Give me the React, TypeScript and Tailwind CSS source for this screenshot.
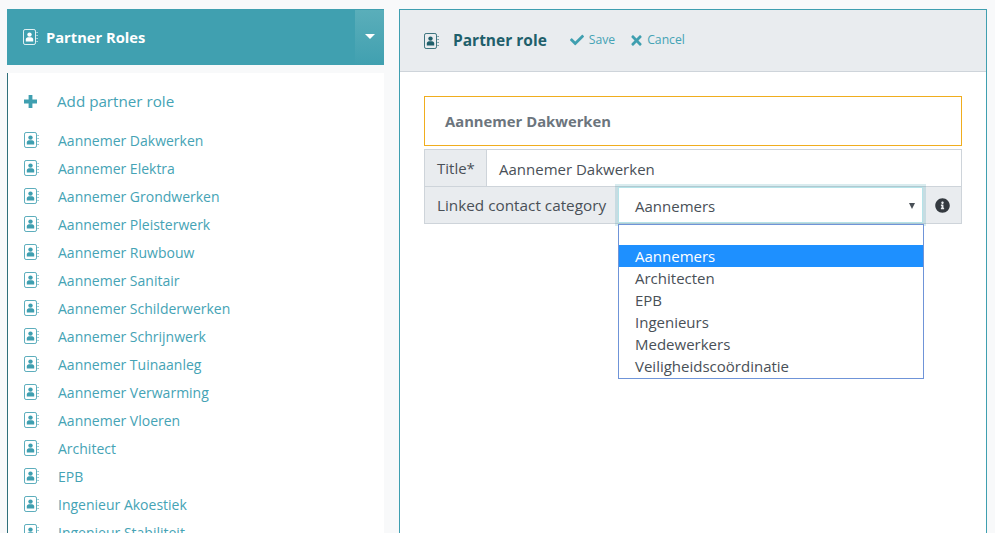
import React from 'react';
import { FaCheck, FaInfoCircle, FaTimes } from 'react-icons/fa';

const roles = [
  'Aannemer Dakwerken',
  'Aannemer Elektra',
  'Aannemer Grondwerken',
  'Aannemer Pleisterwerk',
  'Aannemer Ruwbouw',
  'Aannemer Sanitair',
  'Aannemer Schilderwerken',
  'Aannemer Schrijnwerk',
  'Aannemer Tuinaanleg',
  'Aannemer Verwarming',
  'Aannemer Vloeren',
  'Architect',
  'EPB',
  'Ingenieur Akoestiek',
  'Ingenieur Stabiliteit',
];

const categories = ['Aannemers', 'Architecten', 'EPB', 'Ingenieurs', 'Medewerkers', 'Veiligheidscoördinatie'];

// address book outline with a person in it and the small tabs on the right
function BookIcon({ className }: { className?: string }) {
  return (
    <svg viewBox="0 0 15 16" className={className} fill="currentColor">
      <rect x="0.5" y="0.5" width="12" height="15" rx="1.6" fill="none" stroke="currentColor" strokeWidth="1" opacity="0.85" />
      <circle cx="6.5" cy="5.6" r="2.2" />
      <path d="M2.8 12.4v-1.8c0-1.4 1-2.3 2.2-2.3h3c1.2 0 2.2.9 2.2 2.3v1.8z" />
      <rect x="13.4" y="3" width="1.4" height="1" opacity="0.7" />
      <rect x="13.4" y="6" width="1.4" height="1" opacity="0.7" />
      <rect x="13.4" y="9" width="1.4" height="1" opacity="0.7" />
      <rect x="13.4" y="12" width="1.4" height="1" opacity="0.7" />
    </svg>
  );
}

export default function App() {
  return (
    <div className="h-[533px] w-[995px] overflow-hidden bg-[#f8f9fa] font-['Open_Sans','Noto_Sans',sans-serif] text-[14px] text-[#495057]">
      <div className="flex items-start pt-[9px] pl-[7px]">
        {/* Left column */}
        <div className="w-[377px] shrink-0">
          <div className="flex h-[56px] items-stretch justify-between bg-[#40a0b0] text-white">
            <div className="flex items-center pl-[16px]">
              <BookIcon className="h-[16px] w-[15px]" />
              <span className="ml-[8px] text-[14.7px] font-bold">Partner Roles</span>
            </div>
            <div className="mt-[1px] flex w-[29px] items-start justify-center bg-gradient-to-b from-[#5aaeba] to-[#40a0b0] pt-[24px]">
              <span className="h-0 w-0 border-x-[5px] border-t-[5px] border-x-transparent border-t-white" />
            </div>
          </div>
          <div className="mt-[8px] h-[470px] border-l border-[#2f6f7a] bg-white pt-[16px]">
            <div className="flex h-[24px] items-center pl-[16px] text-[15.2px] text-[#45a3b5]">
              <svg viewBox="0 0 13 13" className="h-[13px] w-[13px] text-[#3f9fb0]" fill="currentColor">
                <path d="M4.6 0h3.8v4.6H13v3.8H8.4V13H4.6V8.4H0V4.6h4.6z" />
              </svg>
              <span className="ml-[20px]">Add partner role</span>
            </div>
            <ul className="mt-[13px]">
              {roles.map((role) => (
                <li key={role} className="flex h-[28px] items-center pl-[16px] text-[#45a3b5]">
                  <BookIcon className="h-[16px] w-[15px] text-[#3f9fb0]" />
                  <span className="ml-[19px]">{role}</span>
                </li>
              ))}
            </ul>
          </div>
        </div>

        {/* Right panel */}
        <div className="ml-[15px] h-[540px] w-[588px] shrink-0 border border-[#3f9fb0] bg-white">
          <div className="flex h-[62px] items-center border-b border-[#ced4da] bg-[#e9ecef] pl-[24px]">
            <BookIcon className="h-[16px] w-[15px] text-[#1f5f6b]" />
            <span className="ml-[14px] text-[15.5px] font-bold text-[#1f5f6b]">Partner role</span>
            <span className="ml-[23px] flex items-center text-[12.2px] text-[#45a3b5]">
              <FaCheck className="h-[14px] w-[14px] text-[#3f9fb0]" />
              <span className="ml-[5px]">Save</span>
            </span>
            <span className="ml-[15px] flex items-center text-[12.2px] text-[#45a3b5]">
              <FaTimes className="h-[15px] w-[13px] text-[#3f9fb0]" />
              <span className="ml-[4px]">Cancel</span>
            </span>
          </div>
          <div className="pt-[24px] pl-[24px]">
            <div className="flex h-[50px] w-[538px] items-center border border-[#f0ad1e] pl-[20px] text-[14.8px] font-bold text-[#6c757d]">
              Aannemer Dakwerken
            </div>
            <div className="mt-[3px] w-[538px] border border-[#ced4da] text-[15px]">
              <div className="flex h-[37px] border-b border-[#ced4da]">
                <div className="flex w-[62px] items-center border-r border-[#ced4da] bg-[#e9ecef] pl-[12px]">Title*</div>
                <div className="flex flex-1 items-center pt-[2px] pl-[12px]">Aannemer Dakwerken</div>
              </div>
              <div className="flex h-[36px] bg-[#e9ecef]">
                <div className="flex w-[193px] items-center pl-[12px] text-[15.3px]">Linked contact category</div>
                <div className="relative h-[36px] w-[305px]">
                  <div className="flex h-full items-center justify-between border border-[#b5e3e8] bg-white pt-[2px] pr-[7px] pl-[16px] shadow-[0_0_0_3px_rgba(64,160,176,0.2)]">
                    <span>Aannemers</span>
                    <span className="h-0 w-0 border-x-[3px] border-t-[6px] border-x-transparent border-t-[#495057]" />
                  </div>
                  <div className="absolute top-[37px] left-0 z-10 w-[306px] border border-[#6f94d8] bg-white pb-[1px]">
                    <div className="h-[20px]" />
                    {categories.map((category, i) => (
                      <div
                        key={category}
                        className={
                          i === 0
                            ? 'flex h-[22px] items-center bg-[#1e90ff] pl-[16px] text-white'
                            : 'flex h-[22px] items-center pl-[16px]'
                        }
                      >
                        {category}
                      </div>
                    ))}
                  </div>
                </div>
                <div className="flex flex-1 items-center justify-center text-[#343a40]">
                  <FaInfoCircle className="h-[15px] w-[15px]" />
                </div>
              </div>
            </div>
          </div>
        </div>
      </div>
    </div>
  );
}
